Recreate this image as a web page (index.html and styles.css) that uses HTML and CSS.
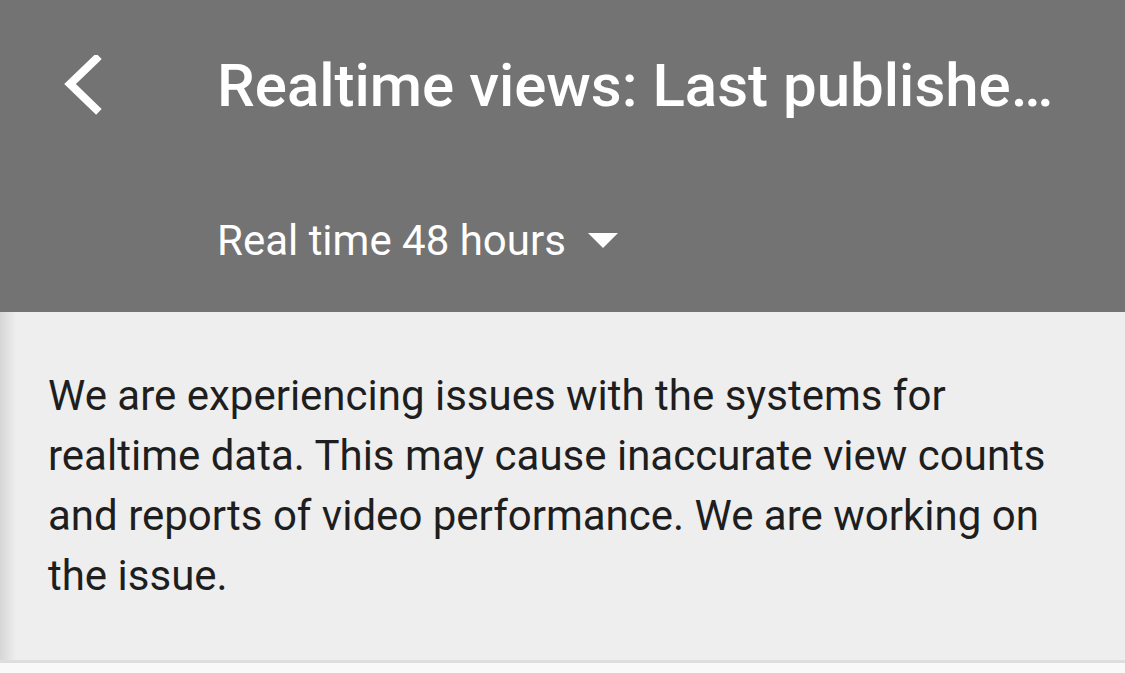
FILE: index.html
```html
<!DOCTYPE html>
<html lang="en">
<head>
<meta charset="UTF-8">
<meta name="viewport" content="width=device-width, initial-scale=1.0">
<title>Realtime views</title>
<link rel="stylesheet" href="styles.css">
</head>
<body>

<header class="appbar">
<div class="toolbar">
<button class="back" aria-label="Back">
<svg width="40" height="60" viewBox="0 0 40 60">
<polyline points="34,4 8,29 34,54" fill="none" stroke="#fff" stroke-width="8" stroke-linecap="square"/>
</svg>
</button>
<h1 class="title">Realtime views: Last publishe…</h1>
</div>
<div class="range">
<span>Real time 48 hours</span>
<svg class="caret" width="30" height="15" viewBox="0 0 30 15"><polygon points="0,0 30,0 15,15" fill="#fff"/></svg>
</div>
</header>

<main class="notice">
<p>We are experiencing issues with the systems for realtime data. This may cause inaccurate view counts and reports of video performance. We are working on the issue.</p>
</main>

<div class="below"></div>

</body>
</html>
```

FILE: styles.css
```css
body {
margin: 0;
padding: 0;
font-family: Roboto, "Noto Sans", sans-serif;
background-color: #f9f9f9;
height: 673px;
overflow: hidden;
}

.appbar {
background-color: #737373;
height: 312px;
box-sizing: border-box;
color: #fff;
}

.toolbar {
display: flex;
align-items: center;
height: 170px;
padding-left: 62px;
}

.back {
border: 0;
padding: 0;
background-color: transparent;
width: 155px;
height: 60px;
display: flex;
align-items: center;
cursor: pointer;
}

.title {
margin: 0;
font-size: 60px;
font-weight: 500;
white-space: nowrap;
}

.range {
display: flex;
align-items: center;
gap: 22px;
padding-left: 217px;
font-size: 42px;
height: 142px;
box-sizing: border-box;
padding-top: 2px;
padding-bottom: 3px;
}

.notice {
background-color: #eeeeee;
background-image: linear-gradient(to right, #d6d6d6, #eeeeee 16px);
height: 348px;
border-bottom: 3px solid #dedede;
box-sizing: content-box;
}

.notice p {
margin: 0;
padding: 54px 60px 0 48px;
font-size: 42px;
line-height: 60px;
color: #1e1e1e;
}
```
